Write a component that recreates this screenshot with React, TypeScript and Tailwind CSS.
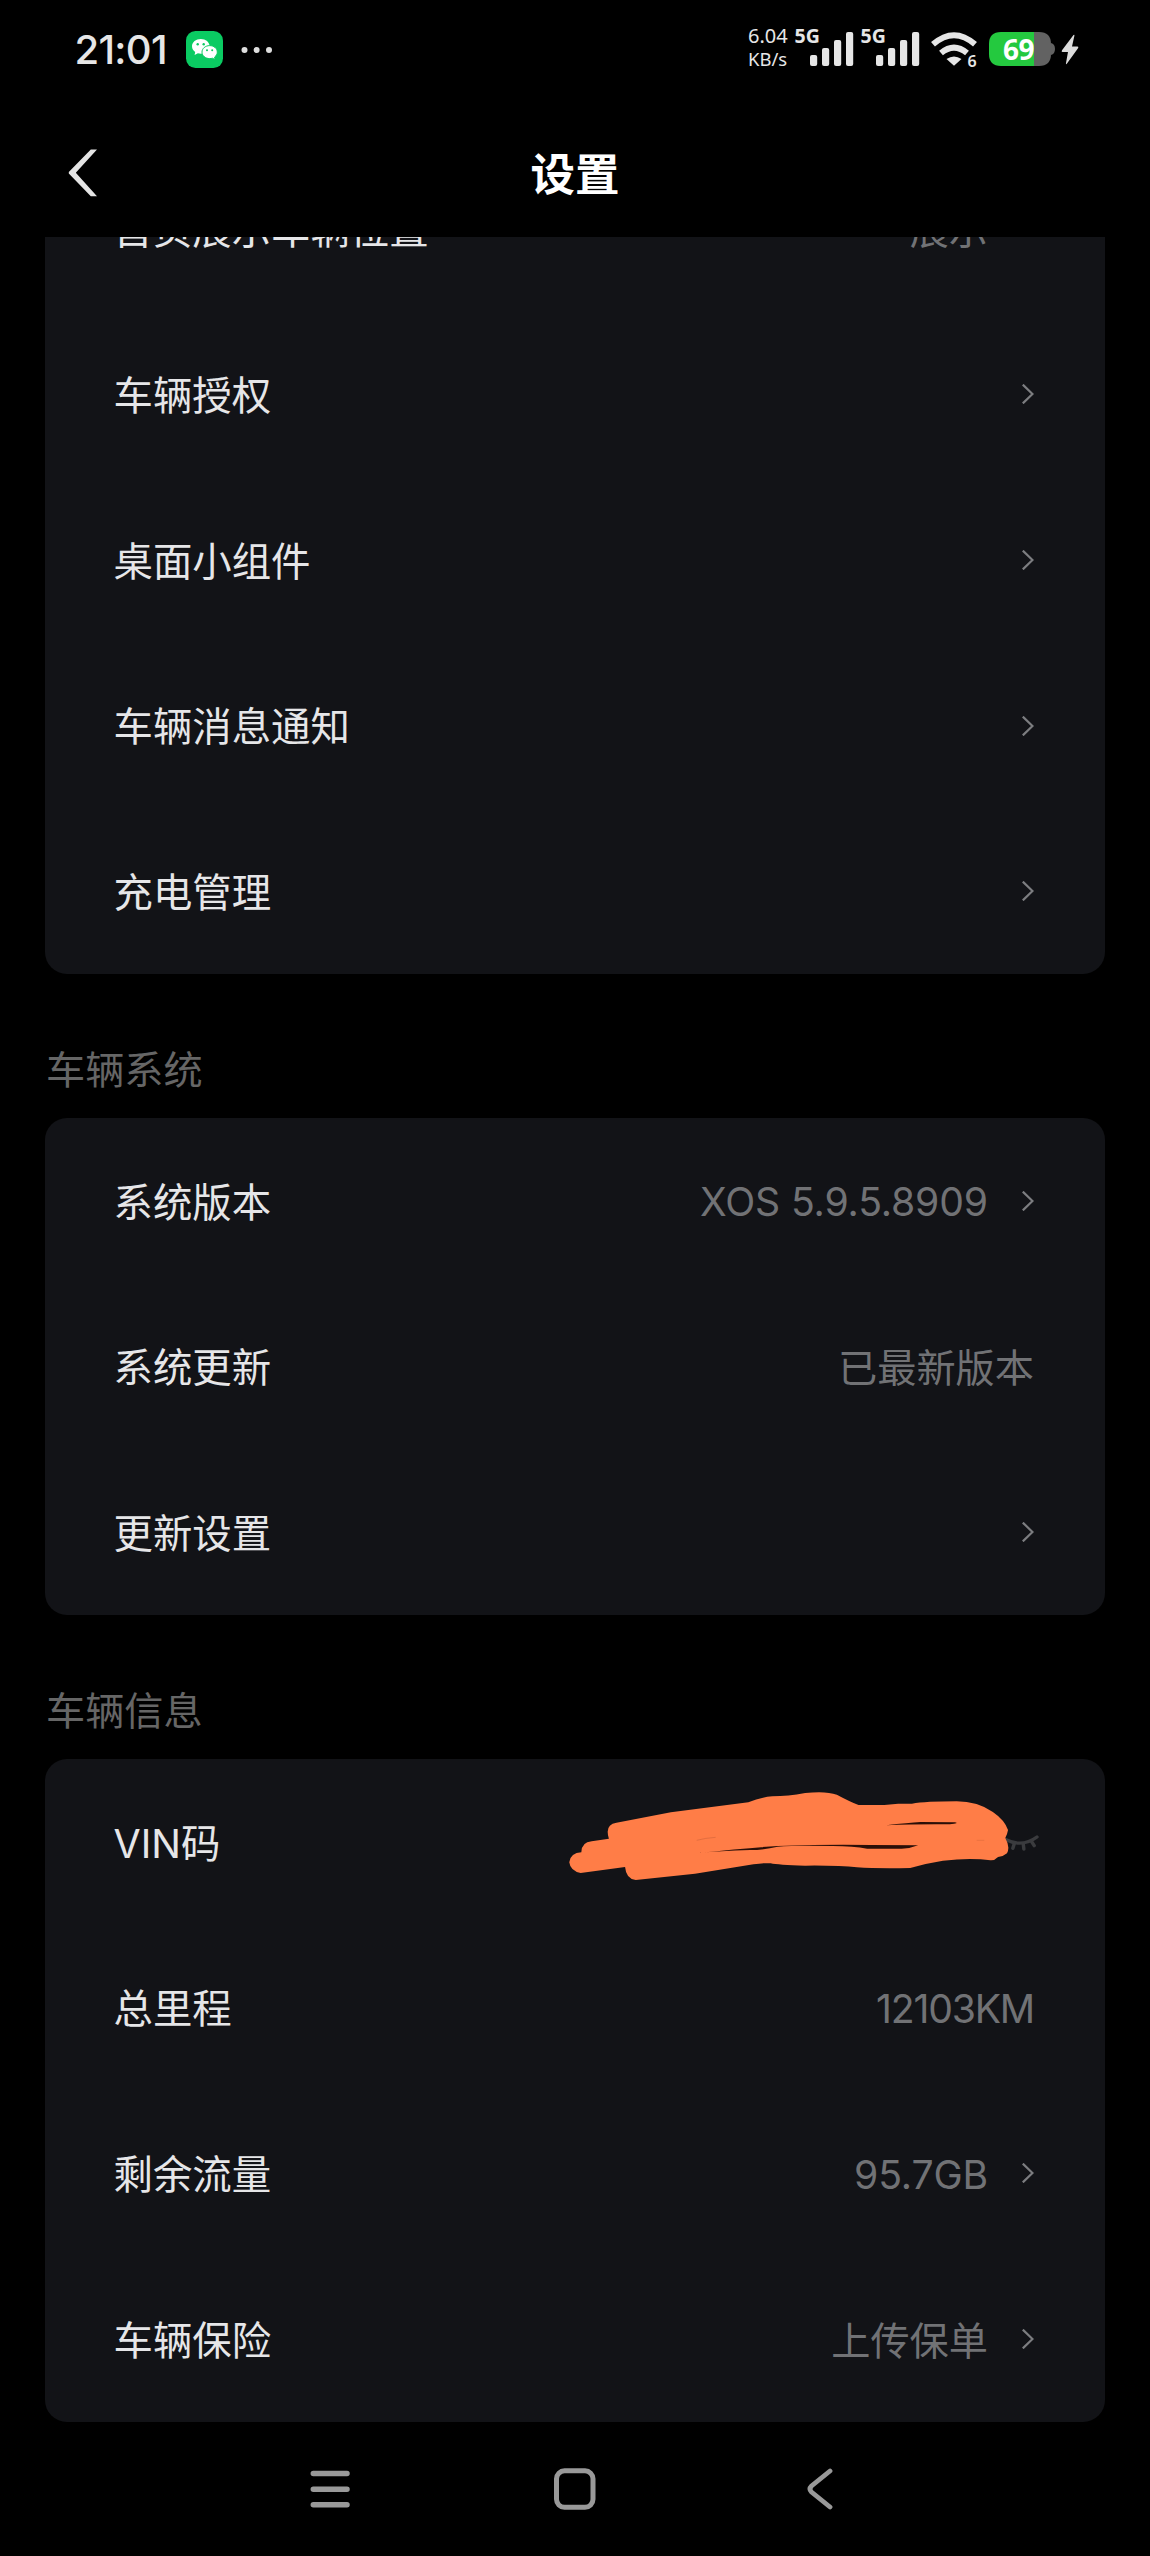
import React from "react";

type RowProps = {
  label: string;
  value?: string;
  valueClass?: string;
  arrow?: boolean;
  children?: React.ReactNode;
};

function Chevron() {
  return (
    <svg className="ml-[34px] h-5 w-3 shrink-0" viewBox="0 0 12 20" fill="none" stroke="#7c7d80" strokeWidth="2.2">
      <path d="M0.8 0.6 L10.5 10 L0.8 19.4" />
    </svg>
  );
}

function Row({ label, value, valueClass = "", arrow = true, children }: RowProps) {
  return (
    <div className="relative flex h-[165.8px] items-center justify-between pr-[71px] pl-[68.5px]">
      <span className="relative top-[2.5px] text-[39.4px] leading-none whitespace-nowrap text-[#e6e6e8]">{label}</span>
      <div className="flex items-center">
        {value && (
          <span className={`relative top-px text-[39.2px] leading-none whitespace-nowrap text-[#717275] ${valueClass}`}>
            {value}
          </span>
        )}
        {arrow && <Chevron />}
      </div>
      {children}
    </div>
  );
}

function Card({ children, className = "" }: { children: React.ReactNode; className?: string }) {
  return <section className={`mx-[45px] shrink-0 rounded-[22px] bg-[#121317] ${className}`}>{children}</section>;
}

function SectionTitle({ children }: { children: React.ReactNode }) {
  return (
    <h2 className="flex h-[143.6px] shrink-0 items-end pb-[28.5px] pl-[46px] text-[39.2px] leading-none font-normal text-[#666666]">
      {children}
    </h2>
  );
}

function SignalBars() {
  return (
    <svg className="h-[34px] w-[44px]" viewBox="0 0 44 34" fill="#e6e6e6">
      <rect x="0" y="23" width="7.2" height="11" rx="2" />
      <rect x="12" y="16" width="7.2" height="18" rx="2" />
      <rect x="24" y="8" width="7.2" height="26" rx="2" />
      <rect x="36" y="0" width="7.2" height="34" rx="2" />
    </svg>
  );
}

function Signal() {
  return (
    <div className="relative h-[38px] w-[66px] shrink-0">
      <span className="absolute top-0 left-0 font-['Noto_Sans',sans-serif] text-[19.5px] leading-[14px] font-bold text-[#e6e6e6]">
        5G
      </span>
      <div className="absolute top-[3.5px] left-[15px]">
        <SignalBars />
      </div>
    </div>
  );
}

function WeChat() {
  return (
    <svg className="ml-[18px] h-[37px] w-[37px]" viewBox="0 0 37 37">
      <rect width="37" height="37" rx="9.5" fill="#0acb62" />
      <path
        d="M14.8 8C9.9 8 6 11.200 6 15.300c0 2.300 1.200 4.300 3.200 5.700l-.6 3 3.300-1.700c.9.250 1.900.4 2.900.4 4.900 0 8.800-3.300 8.800-7.400S19.700 8 14.800 8z"
        fill="#fff"
      />
      <path
        d="M23.700 14.600c-4.300 0-7.700 2.900-7.700 6.500s3.400 6.500 7.700 6.500c1 0 1.900-.1 2.700-.4l2.700 1.400-.5-2.500c1.600-1.200 2.700-3 2.700-5 0-3.600-3.400-6.500-7.600-6.500z"
        fill="#fff"
        stroke="#0acb62"
        strokeWidth="1"
      />
      <g fill="#0acb62">
        <circle cx="11.700" cy="13.200" r="1.200" />
        <circle cx="17.700" cy="13.200" r="1.200" />
        <circle cx="21" cy="19.200" r="1" />
        <circle cx="26.200" cy="19.200" r="1" />
      </g>
    </svg>
  );
}

function StatusBar() {
  return (
    <div className="flex h-[100px] shrink-0 items-start text-[#e6e6e6]">
      <div className="flex items-center pt-[31px] pl-[74.5px]">
        <span className="w-[93px] text-[40px] leading-[37px] font-medium tracking-[-0.7px] whitespace-nowrap">21:01</span>
        <WeChat />
        <svg className="ml-[18px] h-[8px] w-[32px]" viewBox="0 0 32 8" fill="#dedede">
          <circle cx="3.500" cy="4" r="3" />
          <circle cx="15.600" cy="4" r="3" />
          <circle cx="28" cy="4" r="3" />
        </svg>
      </div>
      <div className="ml-auto flex items-start pt-[28.500px] pr-[71px]">
        <div className="flex w-[46.500px] flex-col font-['Noto_Sans',sans-serif] text-[20px] leading-[14px] whitespace-nowrap">
          <span>6.04</span>
          <span className="mt-[9.500px] text-[18.500px]">KB/s</span>
        </div>
        <Signal />
        <Signal />
        <div className="relative ml-[4px] h-[38px] w-[47px] shrink-0">
          <svg className="h-[38px] w-[47px]" viewBox="0 0 47 38" fill="none" stroke="#e6e6e6" strokeWidth="6">
            <path d="M2 15.300 Q23 -2.800 44 15.300" />
            <path d="M10 24 Q23 13.200 36 24" />
            <path d="M23 36.800 L15.500 30 Q23 24.800 30.500 30 Z" fill="#e6e6e6" stroke="none" />
          </svg>
          <span className="absolute top-[27.500px] left-[37px] font-['Noto_Sans',sans-serif] text-[16px] leading-[11px] font-semibold">
            6
          </span>
        </div>
        <div className="relative mt-[3.500px] ml-[11.500px] h-[34px] w-[66px] shrink-0">
          <svg className="h-[34px] w-[66px]" viewBox="0 0 66 34">
            <path d="M45 0h5q12 0 12 12v10q0 12-12 12h-5z" fill="#626262" />
            <path d="M45 0H12Q0 0 0 12v10q0 12 12 12h33z" fill="#24c93f" />
            <path d="M62 11q4 1 4 6t-4 6z" fill="#626262" />
          </svg>
          <span className="absolute top-0 left-[14px] font-['Noto_Sans',sans-serif] text-[28px] leading-[35px] font-bold tracking-[-0.500px] text-white">
            69
          </span>
        </div>
        <svg className="mt-[5px] ml-[6px] h-[31px] w-[18px] shrink-0" viewBox="0 0 18 31" fill="#dcdcdc">
          <path d="M12.500 1 Q13.600 0 13.400 1.800 L11 12.500 H16.500 Q18 12.800 17 14.300 L6 29.600 Q4.700 31 5 29 L7 18 H1.500 Q0 17.800 1 16.300 Z" />
        </svg>
      </div>
    </div>
  );
}

function Scribble() {
  return (
    <svg
      className="absolute top-[11px] left-[495px] h-[130px] w-[540px]"
      viewBox="0 0 1568 390"
      preserveAspectRatio="none"
    >
      <g stroke="#3a3b3e" strokeWidth="10" strokeLinecap="round" fill="none">
        <path d="M1350 208 Q1400 234 1443 201" />
        <path d="M1378 218 L1373 235 M1403 220 L1405 237 M1427 214 L1435 227" />
      </g>
      <path
        fill="#ff7d47"
        d="M120 247 Q121 216 150 214 L200 206 Q187 163 222 158 L380 127 L605 97 Q640 82 675 79 Q720 79 770 69 Q830 62 862 74 Q900 95 925 105 L1000 105 L1040 101 L1080 101 Q1120 94 1210 94 Q1270 94 1315 126 Q1349 150 1359 180 Q1357 193 1351 204 Q1366 231 1356 250 Q1345 260 1330 261 Q1320 272 1308 271 Q1250 263 1170 272 Q1120 280 1075 294 Q980 296 920 292 Q870 286 770 287 Q690 285 670 280 Q650 278 620 283 L450 311 L278 330 Q250 327 247 291 L118 309 Q88 303 85 277 Q89 248 120 247 Z"
      />
      <g fill="#2a0f08">
        <path d="M1005 166 Q1070 158 1105 156 L1205 157 Q1220 160 1190 163 Q1090 162 1005 166 Z" />
        <path d="M460 249 Q600 234 690 228 Q850 222 960 225 L1098 226 Q1075 236 1050 236 L950 236 Q910 228 850 228 Q740 226 690 230 Q650 240 610 240 Q520 243 460 249 Z" />
      </g>
      <path d="M455 211 Q480 204 510 202" stroke="#c75f38" strokeWidth="1.500" fill="none" />
      <path d="M1268 211 H1290" stroke="#d9683b" strokeWidth="1.500" fill="none" />
    </svg>
  );
}

export default function App() {
  return (
    <div className="flex h-[2556px] w-[1150px] flex-col overflow-hidden bg-black font-['Inter','Noto_Sans_CJK_SC',sans-serif]">
      <StatusBar />

      <header className="relative flex h-[137px] shrink-0 items-start justify-center pt-[52px]">
        <svg className="absolute top-[49px] left-[68px] h-[48px] w-[30px]" viewBox="0 0 30 48" fill="#e4e4e4">
          <path d="M22.800 0.500 H29 L7.800 23.800 L29 47.200 H22.800 L0.800 24.600 V23 Z" />
        </svg>
        <h1 className="text-[44.500px] leading-[46px] font-bold text-white">设置</h1>
      </header>

      <main className="flex h-[2190px] shrink-0 flex-col overflow-hidden">
        <Card className="mt-[-91.700px]">
          <Row label="首页展示车辆位置" value="展示" arrow={false} valueClass="mr-[46px]" />
          <Row label="车辆授权" />
          <Row label="桌面小组件" />
          <Row label="车辆消息通知" />
          <Row label="充电管理" />
        </Card>

        <SectionTitle>车辆系统</SectionTitle>
        <Card>
          <Row label="系统版本" value="XOS 5.9.5.8909" valueClass="tracking-[-0.15px]" />
          <Row label="系统更新" value="已最新版本" arrow={false} />
          <Row label="更新设置" />
        </Card>

        <SectionTitle>车辆信息</SectionTitle>
        <Card>
          <Row label="VIN码" arrow={false}>
            <Scribble />
          </Row>
          <Row label="总里程" value="12103KM" arrow={false} valueClass="tracking-[-1.2px]" />
          <Row label="剩余流量" value="95.7GB" valueClass="tracking-[-0.15px]" />
          <Row label="车辆保险" value="上传保单" />
        </Card>
      </main>

      <nav className="flex grow items-start pt-[40px] pl-[310px]">
        <svg className="h-[44px] w-[40px]" viewBox="0 0 40 44" stroke="#999" strokeWidth="5.500" strokeLinecap="round">
          <path d="M3.300 6.500 H37 M3.300 22.200 H37 M3.300 37.800 H37" />
        </svg>
        <svg className="ml-[203px] h-[44px] w-[44px]" viewBox="0 0 44 44" fill="none" stroke="#999" strokeWidth="5">
          <rect x="3.500" y="3.800" width="36.500" height="36.500" rx="8" />
        </svg>
        <svg className="ml-[210px] h-[44px] w-[26px]" viewBox="0 0 26 44" fill="none" stroke="#999" strokeWidth="4.800" strokeLinecap="round">
          <path d="M23 4 L4.500 19 Q1.500 22 4.500 25 L23 40" />
        </svg>
      </nav>
    </div>
  );
}
